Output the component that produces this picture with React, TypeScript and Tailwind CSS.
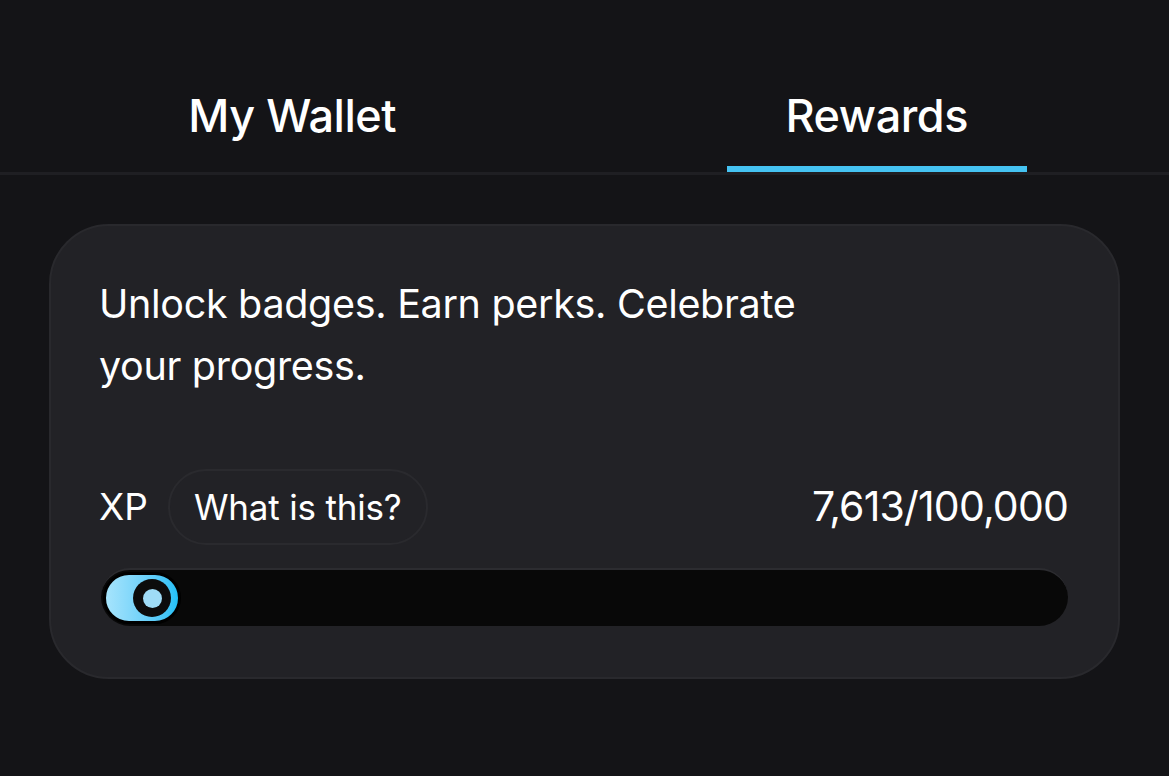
import React from "react";

export default function App() {
  const font = { fontFamily: "Inter, 'Noto Sans', sans-serif" };
  return (
    <div className="w-[1169px] h-[776px] bg-[#141417] text-white overflow-hidden" style={font}>
      <div className="pt-[60px]">
        <div className="grid grid-cols-2 border-b-[3px] border-[#1f1f23]">
          <div className="flex justify-center">
            <div className="w-[300px] h-[112px] flex items-center justify-center text-[45px] font-medium tracking-[-0.01em]">
              My Wallet
            </div>
          </div>
          <div className="flex justify-center">
            <div className="w-[300px] h-[112px] flex items-center justify-center text-[45px] font-medium tracking-[-0.01em] border-b-[6px] border-[#45c3f2] pt-[6px]">
              Rewards
            </div>
          </div>
        </div>
      </div>
      <div className="px-[49px] pt-[49px]">
        <div className="h-[455px] rounded-[60px] bg-[#222226] border-2 border-[#29292d] pl-[48px] pr-[50px] pt-[47px]">
          <p className="text-[39.5px] leading-[62px] w-[740px] tracking-[-0.008em]">
            Unlock badges. Earn perks. Celebrate your progress.
          </p>
          <div className="mt-[72px] flex items-center justify-between">
            <div className="flex items-center gap-[20px]">
              <span className="text-[37px]">XP</span>
              <span className="h-[76px] pl-[24px] pr-[24px] rounded-full border-2 border-[#2a2a2e] flex items-center text-[35px] tracking-[-0.005em]">
                What is this?
              </span>
            </div>
            <span className="text-[41px] tracking-[-0.02em]">7,613/100,000</span>
          </div>
          <div className="mt-[23px] ml-[2px] h-[58px] rounded-full bg-[#080808] border-t-2 border-[#2c2c30] p-[2px] flex">
            <div className="w-[78px] h-full rounded-full border-[3px] border-black bg-gradient-to-r from-[#a6e4fc] to-[#1ec0f7] flex items-center justify-end pr-[7px]">
              <div className="w-[38px] h-[38px] rounded-full bg-[#0c0c0c] flex items-center justify-center">
                <div className="w-[19px] h-[19px] rounded-full bg-[#9fdcf7]" />
              </div>
            </div>
          </div>
        </div>
      </div>
    </div>
  );
}
